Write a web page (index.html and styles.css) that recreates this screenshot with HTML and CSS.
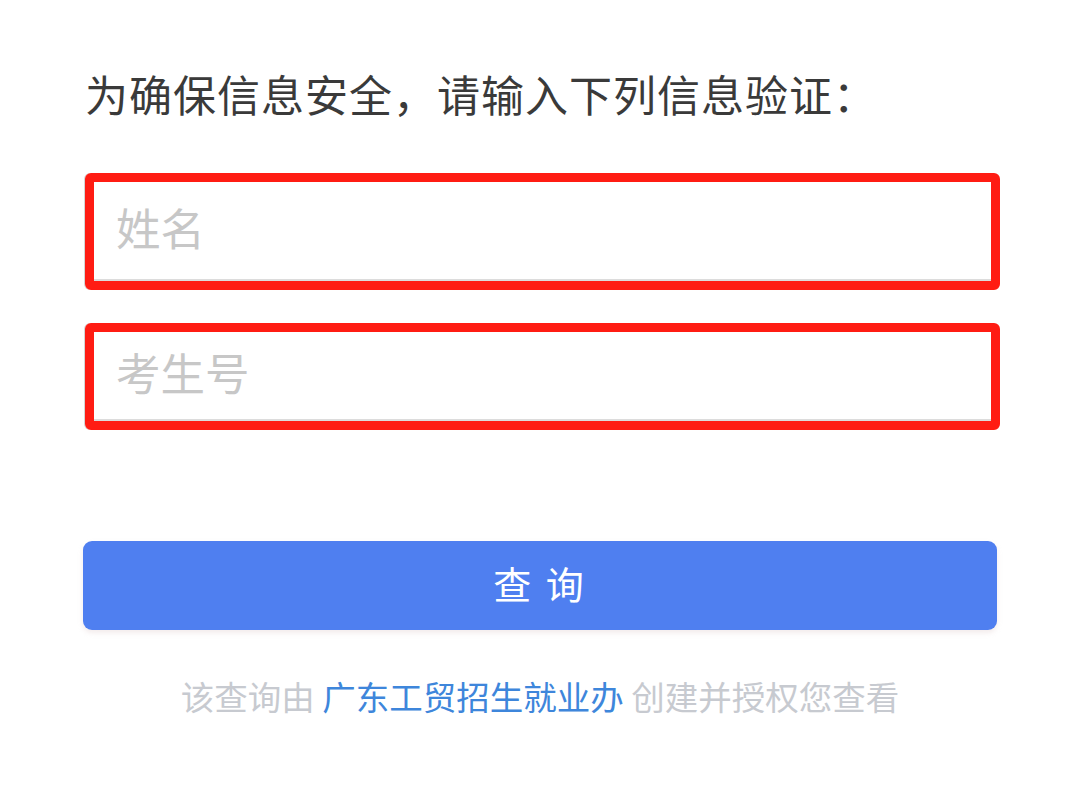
FILE: index.html
```html
<!DOCTYPE html>
<html lang="zh-CN">
<head>
<meta charset="utf-8">
<title>信息验证</title>
<link rel="stylesheet" href="styles.css">
</head>
<body>
<main class="page">
  <h1 class="title">为确保信息安全，请输入下列信息验证：</h1>
  <div class="fields">
    <label class="field field-name">
      <input class="input" type="text" placeholder="姓名">
    </label>
    <label class="field field-id">
      <input class="input" type="text" placeholder="考生号">
    </label>
  </div>
  <button class="submit" type="button">查 询</button>
  <p class="note">该查询由 <span class="org">广东工贸招生就业办</span> 创建并授权您查看</p>
</main>
</body>
</html>
```
FILE: styles.css
```css
html, body {
  margin: 0;
  padding: 0;
  background: #ffffff;
}

body {
  font-family: "Noto Sans CJK SC", "Noto Sans", sans-serif;
  width: 1080px;
  height: 794px;
  overflow: hidden;
}

.page {
  display: flex;
  flex-direction: column;
  padding: 63px 83px 0 83px;
}

.title {
  margin: 0;
  padding-left: 2px;
  font-size: 43px;
  line-height: 60px;
  font-weight: 400;
  color: #3a3a3a;
  letter-spacing: 1px;
}

.fields {
  display: flex;
  flex-direction: column;
  gap: 33px;
  margin-top: 50px;
  padding-left: 2px;
  margin-right: -3px;
}

.field {
  display: flex;
  box-sizing: border-box;
  border: 9px solid #ff1c13;
  border-radius: 6px;
  box-shadow: -1px 0 0 #d4d4d4;
}

.field-name {
  height: 117px;
}

.field-id {
  height: 107px;
}

.input {
  flex: 1;
  min-width: 0;
  border: 0;
  border-bottom: 2px solid #dcdcdc;
  outline: none;
  background: #ffffff;
  padding: 0 0 8px 22px;
  font-family: inherit;
  font-size: 44.5px;
  color: #333333;
}

.input::placeholder {
  color: #c7c7c7;
}

.submit {
  margin-top: 111px;
  height: 89px;
  padding: 0 0 6px 0;
  border: 0;
  border-radius: 9px;
  background: #4f7ff0;
  color: #ffffff;
  font-family: inherit;
  font-size: 38px;
  letter-spacing: 3px;
  box-shadow: 0 3px 5px rgba(220, 200, 200, 0.35);
  cursor: pointer;
}

.note {
  margin: 44px 0 0 0;
  text-align: center;
  font-size: 33.5px;
  line-height: 44px;
  color: #c7cad0;
}

.org {
  color: #3e86db;
}
```
